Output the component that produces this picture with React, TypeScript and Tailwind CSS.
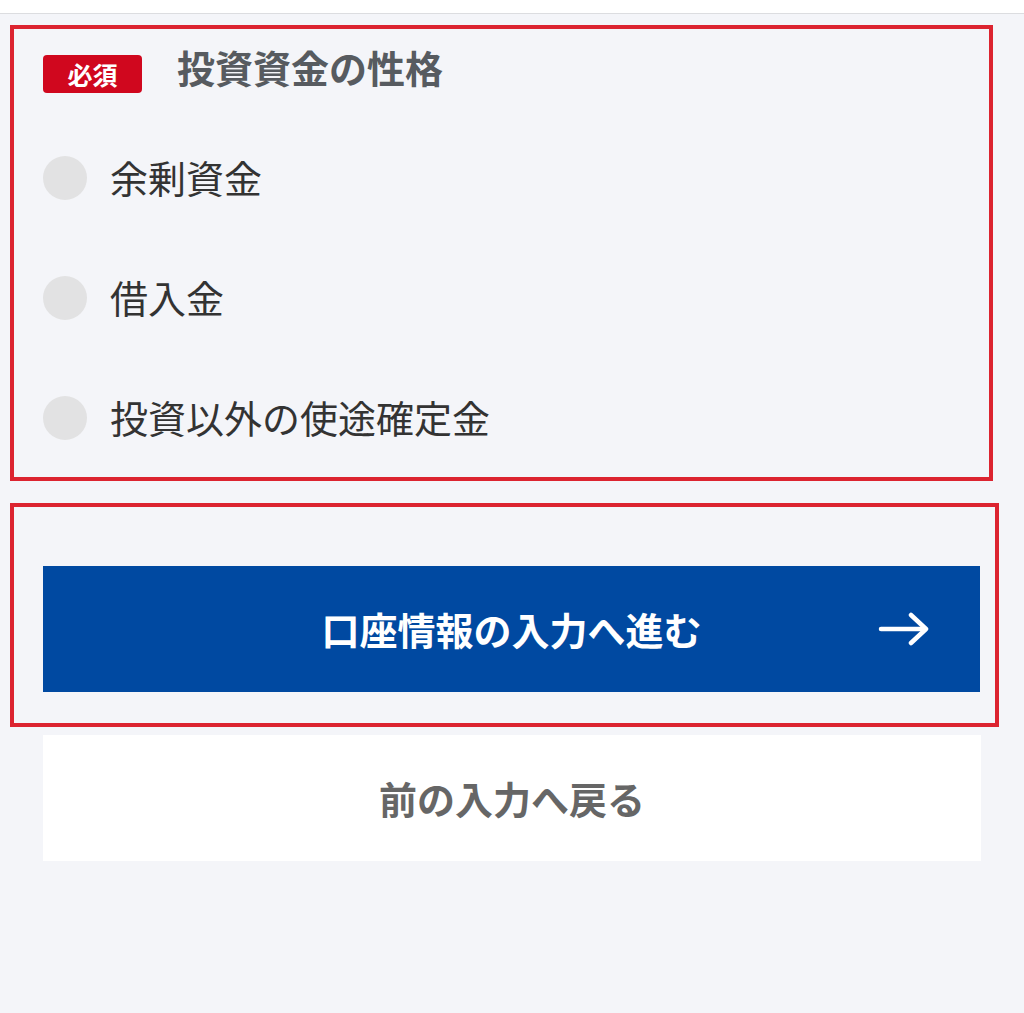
import React from 'react';

const OPTIONS = ['余剰資金', '借入金', '投資以外の使途確定金'];

const FONT = "font-['Noto_Sans_CJK_JP','Noto_Sans',sans-serif]";

function ArrowRight() {
    return (
        <svg width="52" height="34" viewBox="0 0 52 34" fill="none" stroke="white" strokeWidth="4.5" strokeLinecap="round" strokeLinejoin="round">
            <path d="M3 17 H47" />
            <path d="M33 3 L48 17 L33 31" />
        </svg>
    );
}

export default function App() {
    return (
        <div className={`min-h-[1013px] w-[1024px] bg-[#f4f5f9] ${FONT}`}>
            <div className="h-[14px] bg-white border-b border-[#dcdde0]" />

            {/* question block */}
            <div className="ml-[10px] mt-[11px] w-[983px] h-[456px] border-[4px] border-[#dc2430] pl-[29px] pt-[26px]">
                <div className="flex items-center h-[38px]">
                    <span className="inline-flex items-center justify-center w-[99px] h-[38px] rounded-[4px] bg-[#d0071e] text-white text-[25px] font-bold leading-none">
                        必須
                    </span>
                    <h2 className="ml-[35px] text-[38px] font-bold text-[#575b60] leading-none -mt-[14px]">投資資金の性格</h2>
                </div>
                <div className="mt-[25px]">
                    {OPTIONS.map((label) => (
                        <label key={label} className="flex items-center h-[120px] cursor-pointer">
                            <span className="w-[44px] h-[44px] rounded-full bg-[#e2e2e3] flex-shrink-0" />
                            <span className="ml-[23px] text-[38px] text-[#333333] leading-none -mt-[3px]">{label}</span>
                        </label>
                    ))}
                </div>
            </div>

            {/* submit block */}
            <div className="ml-[10px] mt-[22px] w-[989px] h-[224px] border-[4px] border-[#dc2430] pl-[29px] pt-[59px]">
                <button className="relative flex items-center justify-center w-[937px] h-[126px] bg-[#0049a1] text-white text-[38px] font-bold leading-none">
                    口座情報の入力へ進む
                    <span className="absolute right-[50px] top-1/2 -translate-y-1/2 flex">
                        <ArrowRight />
                    </span>
                </button>
            </div>

            <div className="ml-[43px] mt-[8px] w-[938px] h-[126px] bg-white flex items-center justify-center">
                <span className="text-[38px] font-bold text-[#666666] leading-none">前の入力へ戻る</span>
            </div>
        </div>
    );
}
